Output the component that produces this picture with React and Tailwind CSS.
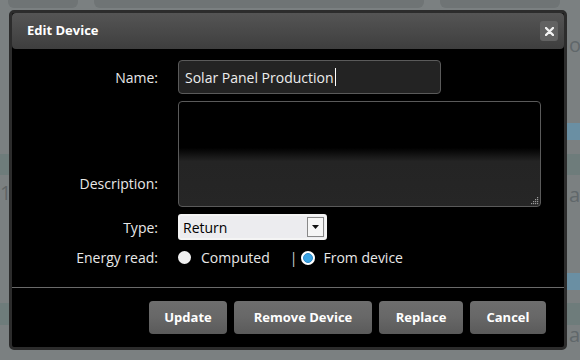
import React from 'react';

const font = { fontFamily: '"Open Sans", "Noto Sans", sans-serif' };

// Faded page content sitting behind the modal
const Backdrop = () => (
    <div className="absolute inset-0 bg-[#7b8081] overflow-hidden">
        <div className="flex gap-4 px-2 -mt-2">
            <div className="h-4 w-[70px] rounded-md bg-[#6f7475]" />
            <div className="h-4 w-[330px] rounded-md bg-[#6f7475]" />
            <div className="h-4 w-[120px] rounded-md bg-[#6f7475]" />
        </div>
        <div className="absolute left-0 top-[154px] h-[21px] w-full bg-[#6e7c7b]" />
        <div className="absolute left-0 top-[303px] h-[22px] w-full bg-[#6e7c7b]" />
        <div className="absolute left-0 top-[178px] text-[20px] text-[#5f6465]">1</div>
        <div className="absolute right-0 top-[123px] h-[17px] w-[14px] bg-[#6a8fa3]" />
        <div className="absolute right-0 top-[273px] h-[17px] w-[14px] bg-[#6a8fa3]" />
        <div className="absolute left-[569px] top-[30px] w-[11px] overflow-hidden text-[20px] text-[#60676a]">o</div>
        <div className="absolute left-[569px] top-[180px] w-[11px] overflow-hidden text-[20px] text-[#60676a]">a</div>
        <div className="absolute left-[569px] top-[320px] w-[11px] overflow-hidden text-[20px] text-[#60676a]">a</div>
    </div>
);

const Label = ({ children, className = '' }) => (
    <div className={`text-right text-[14px] text-[#e8e8e8] ${className}`}>{children}</div>
);

const Radio = ({ checked }) =>
    checked ? (
        <span className="inline-block h-[14px] w-[14px] rounded-full bg-white p-[2px]">
            <span className="block h-full w-full rounded-full bg-[#3aa3e3] border border-[#2a88c8]" />
        </span>
    ) : (
        <span className="inline-block h-[13px] w-[13px] rounded-full bg-[#f0f0f0]" />
    );

const Button = ({ children, className }) => (
    <button
        className={`h-[33px] rounded-[4px] bg-gradient-to-b from-[#6e6e6e] via-[#676767] to-[#5a5a5a] text-[13px] font-bold text-white ${className}`}
    >
        {children}
    </button>
);

export default function App() {
    return (
        <div className="relative h-[360px] w-[580px] overflow-hidden" style={font}>
            <Backdrop />

            <div className="absolute left-[9px] top-[10px] flex h-[340px] w-[558px] flex-col rounded-[5px] border-[3px] border-[#2c2c2c] bg-black">
                {/* title bar */}
                <div className="flex h-[36px] items-center justify-between rounded-[4px] bg-gradient-to-b from-[#555555] to-[#3e3e3e] pl-[15px] pr-[6px]">
                    <span className="text-[13px] font-bold text-white">Edit Device</span>
                    <span className="flex h-[20px] w-[18px] items-center justify-center rounded-[3px] bg-[#626262]">
                        <svg width="9" height="9" viewBox="0 0 9 9">
                            <path d="M1 1L8 8M8 1L1 8" stroke="#f2f2f2" strokeWidth="2.4" strokeLinecap="round" />
                        </svg>
                    </span>
                </div>

                {/* form */}
                <div className="mt-[11px] grid grid-cols-[146px_1fr] items-center gap-x-[20px] gap-y-[7px]">
                    <Label>Name:</Label>
                    <div className="flex h-[34px] w-[263px] items-center rounded-[4px] border border-[#5a5a5a] bg-[#232323] px-[6px] text-[14px] text-[#ededed]">
                        Solar Panel Production
                        <span className="ml-[1px] h-[18px] w-[1px] bg-white" />
                    </div>

                    <Label className="self-end pb-[13px]">Description:</Label>
                    <div className="relative h-[106px] w-[363px] rounded-[4px] border border-[#5a5a5a] bg-[linear-gradient(to_bottom,#000_0%,#000_44%,#242424_57%,#262626_100%)]">
                        <svg className="absolute bottom-[1px] right-[1px]" width="10" height="10" viewBox="0 0 10 10">
                            <g fill="#9a9a9a">
                                <rect x="8" y="2" width="1.2" height="1.2" />
                                <rect x="6" y="4" width="1.2" height="1.2" />
                                <rect x="8" y="4" width="1.2" height="1.2" />
                                <rect x="4" y="6" width="1.2" height="1.2" />
                                <rect x="6" y="6" width="1.2" height="1.2" />
                                <rect x="8" y="6" width="1.2" height="1.2" />
                                <rect x="2" y="8" width="1.2" height="1.2" />
                                <rect x="4" y="8" width="1.2" height="1.2" />
                                <rect x="6" y="8" width="1.2" height="1.2" />
                                <rect x="8" y="8" width="1.2" height="1.2" />
                            </g>
                        </svg>
                    </div>

                    <Label>Type:</Label>
                    <div className="flex h-[26px] w-[149px] items-center rounded-[3px] border-2 border-[#f4f4f4] bg-[#ececef] pl-[3px] pr-[1px]">
                        <span className="flex-1 text-[14px] text-black">Return</span>
                        <span className="flex h-[20px] w-[17px] items-center justify-center border border-[#888] bg-[#f6f6f6]">
                            <svg width="7" height="4" viewBox="0 0 7 4">
                                <path d="M0 0H7L3.5 4Z" fill="#111" />
                            </svg>
                        </span>
                    </div>

                    <Label>Energy read:</Label>
                    <div className="flex items-center text-[14px] text-[#e8e8e8]">
                        <Radio />
                        <span className="ml-[10px]">Computed</span>
                        <span className="ml-[20px] text-[#cfcfcf]">|</span>
                        <span className="ml-[4px] flex items-center"><Radio checked /></span>
                        <span className="ml-[8px]">From device</span>
                    </div>
                </div>

                <div className="mt-[19px] h-px bg-[#6a6a6a]" />

                {/* actions */}
                <div className="mt-[13px] flex justify-end gap-[7px] pr-[18px]">
                    <Button className="w-[78px]">Update</Button>
                    <Button className="w-[138px]">Remove Device</Button>
                    <Button className="w-[84px]">Replace</Button>
                    <Button className="w-[76px]">Cancel</Button>
                </div>
            </div>
        </div>
    );
}
